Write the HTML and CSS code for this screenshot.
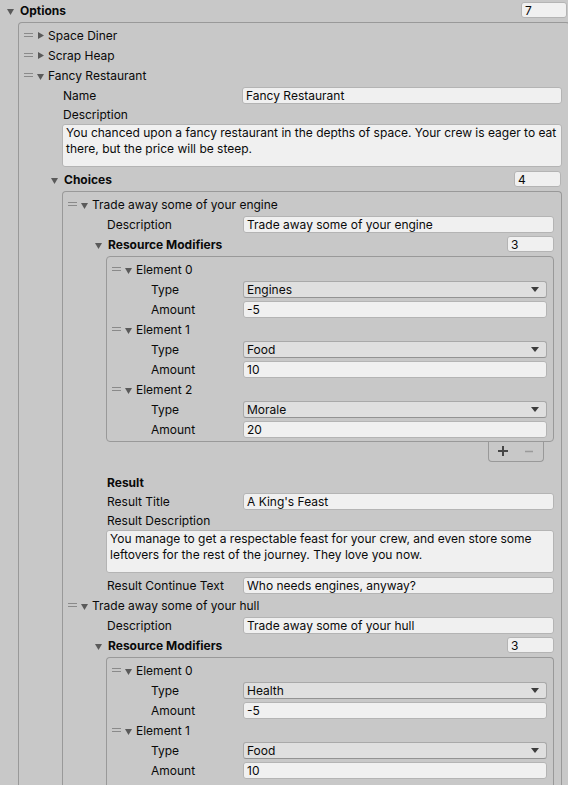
FILE: index.html
```html
<!DOCTYPE html>
<html>
<head>
<meta charset="utf-8">
<link rel="stylesheet" href="styles.css">
</head>
<body>
<div class="row header">
  <svg class="fold" viewBox="0 0 7 7"><polygon points="0,1 7,1 3.5,7"/></svg>
  <span class="bold">Options</span>
  <div class="count count-top">7</div>
</div>
<div class="box opts-box">
  <div class="row item"><span class="handle"></span><svg class="fold closed" viewBox="0 0 7 7"><polygon points="1,0 7,3.5 1,7"/></svg><span>Space Diner</span></div>
  <div class="row item"><span class="handle"></span><svg class="fold closed" viewBox="0 0 7 7"><polygon points="1,0 7,3.5 1,7"/></svg><span>Scrap Heap</span></div>
  <div class="row item"><span class="handle"></span><svg class="fold" viewBox="0 0 7 7"><polygon points="0,1 7,1 3.5,7"/></svg><span>Fancy Restaurant</span></div>
  <div class="row prop"><span class="lbl lbl-a">Name</span><div class="field">Fancy Restaurant</div></div>
  <div class="row prop ta-label">Description</div>
  <div class="textarea">You chanced upon a fancy restaurant in the depths of space. Your crew is eager to eat<br>there, but the price will be steep.</div>
  <div class="row sub">
    <svg class="fold" viewBox="0 0 7 7"><polygon points="0,1 7,1 3.5,7"/></svg>
    <span class="bold">Choices</span>
    <div class="count count-mid">4</div>
  </div>
  <div class="box choices-box">
    <div class="row item"><span class="handle"></span><svg class="fold" viewBox="0 0 7 7"><polygon points="0,1 7,1 3.5,7"/></svg><span>Trade away some of your engine</span></div>
    <div class="row prop"><span class="lbl lbl-b">Description</span><div class="field">Trade away some of your engine</div></div>
    <div class="row sub">
      <svg class="fold" viewBox="0 0 7 7"><polygon points="0,1 7,1 3.5,7"/></svg>
      <span class="bold">Resource Modifiers</span>
      <div class="count">3</div>
    </div>
    <div class="box rm-box">
      <div class="row item"><span class="handle"></span><svg class="fold" viewBox="0 0 7 7"><polygon points="0,1 7,1 3.5,7"/></svg><span>Element 0</span></div>
      <div class="row prop"><span class="lbl lbl-c">Type</span><div class="field dropdown"><span>Engines</span><svg class="arrow" viewBox="0 0 8 5"><polygon points="0,0 8,0 4,5"/></svg></div></div>
      <div class="row prop"><span class="lbl lbl-c">Amount</span><div class="field">-5</div></div>
      <div class="row item"><span class="handle"></span><svg class="fold" viewBox="0 0 7 7"><polygon points="0,1 7,1 3.5,7"/></svg><span>Element 1</span></div>
      <div class="row prop"><span class="lbl lbl-c">Type</span><div class="field dropdown"><span>Food</span><svg class="arrow" viewBox="0 0 8 5"><polygon points="0,0 8,0 4,5"/></svg></div></div>
      <div class="row prop"><span class="lbl lbl-c">Amount</span><div class="field">10</div></div>
      <div class="row item"><span class="handle"></span><svg class="fold" viewBox="0 0 7 7"><polygon points="0,1 7,1 3.5,7"/></svg><span>Element 2</span></div>
      <div class="row prop"><span class="lbl lbl-c">Type</span><div class="field dropdown"><span>Morale</span><svg class="arrow" viewBox="0 0 8 5"><polygon points="0,0 8,0 4,5"/></svg></div></div>
      <div class="row prop"><span class="lbl lbl-c">Amount</span><div class="field">20</div></div>
    </div>
    <div class="footer">
      <svg class="footer-icons" viewBox="0 0 54 19" width="54" height="19">
        <path d="M9 9h10M14 4v10" stroke="#464646" stroke-width="2" fill="none"/>
        <path d="M36 9.5h8" stroke="#9a9a9a" stroke-width="1.5" fill="none"/>
      </svg>
    </div>
    <div class="row prop result-head bold">Result</div>
    <div class="row prop"><span class="lbl lbl-b">Result Title</span><div class="field">A King's Feast</div></div>
    <div class="row prop ta-label">Result Description</div>
    <div class="textarea">You manage to get a respectable feast for your crew, and even store some<br>leftovers for the rest of the journey. They love you now.</div>
    <div class="row prop"><span class="lbl lbl-b">Result Continue Text</span><div class="field">Who needs engines, anyway?</div></div>
    <div class="row item"><span class="handle"></span><svg class="fold" viewBox="0 0 7 7"><polygon points="0,1 7,1 3.5,7"/></svg><span>Trade away some of your hull</span></div>
    <div class="row prop"><span class="lbl lbl-b">Description</span><div class="field">Trade away some of your hull</div></div>
    <div class="row sub">
      <svg class="fold" viewBox="0 0 7 7"><polygon points="0,1 7,1 3.5,7"/></svg>
      <span class="bold">Resource Modifiers</span>
      <div class="count">3</div>
    </div>
    <div class="box rm-box rm-last">
      <div class="row item"><span class="handle"></span><svg class="fold" viewBox="0 0 7 7"><polygon points="0,1 7,1 3.5,7"/></svg><span>Element 0</span></div>
      <div class="row prop"><span class="lbl lbl-c">Type</span><div class="field dropdown"><span>Health</span><svg class="arrow" viewBox="0 0 8 5"><polygon points="0,0 8,0 4,5"/></svg></div></div>
      <div class="row prop"><span class="lbl lbl-c">Amount</span><div class="field">-5</div></div>
      <div class="row item"><span class="handle"></span><svg class="fold" viewBox="0 0 7 7"><polygon points="0,1 7,1 3.5,7"/></svg><span>Element 1</span></div>
      <div class="row prop"><span class="lbl lbl-c">Type</span><div class="field dropdown"><span>Food</span><svg class="arrow" viewBox="0 0 8 5"><polygon points="0,0 8,0 4,5"/></svg></div></div>
      <div class="row prop"><span class="lbl lbl-c">Amount</span><div class="field">10</div></div>
    </div>
  </div>
</div>
</body>
</html>
```
FILE: styles.css
```css
* { box-sizing: border-box; }
html, body { margin: 0; padding: 0; }
body {
  width: 568px;
  height: 785px;
  overflow: hidden;
  background: #c8c8c8;
  font-family: Inter, "Noto Sans", sans-serif;
  font-size: 12px;
  color: #0a0a0a;
}
.row {
  display: flex;
  align-items: center;
  height: 20px;
  white-space: nowrap;
}
.bold { font-weight: 700; }
.fold {
  width: 7px;
  height: 7px;
  flex: none;
  margin-right: 6px;
  margin-top: 2px;
  fill: #5a5a5a;
}
.fold.closed { margin-top: 0; }
.header { padding-left: 7px; padding-right: 1px; }
.sub { padding-left: 32px; }
.item { padding-left: 5px; }
.item .fold { margin-right: 4px; }
.handle {
  width: 9px;
  height: 4px;
  flex: none;
  border-top: 1px solid #8a8a8a;
  border-bottom: 1px solid #8a8a8a;
  margin-right: 4px;
}
.prop { padding-left: 44px; }
.lbl { flex: none; }
.lbl-a { width: 179px; }
.lbl-b { width: 136px; }
.lbl-c { width: 92px; }
.field {
  flex: 1;
  min-width: 0;
  height: 17px;
  display: flex;
  align-items: center;
  padding: 0 3px;
  background: #f0f0f0;
  border: 1px solid #b4b4b4;
  border-radius: 3px;
  line-height: 15px;
}
.dropdown {
  background: #dfdfdf;
  border-color: #a9a9a9 #a9a9a9 #939393;
}
.arrow {
  width: 8px;
  height: 5px;
  margin-left: auto;
  margin-right: 4px;
  fill: #3c3c3c;
}
.count {
  margin-left: auto;
  width: 47px;
  height: 16px;
  display: flex;
  align-items: center;
  padding: 0 3px;
  background: #f0f0f0;
  border: 1px solid #b4b4b4;
  border-radius: 3px;
}
.count-top { width: 46px; }
.count-mid { margin-right: 1px; }
.box {
  border: 1px solid #999;
  border-radius: 4px;
}
.opts-box {
  margin: 2px -2px 0 18px;
  padding: 2px 7px 0 0;
  border-bottom: none;
  border-radius: 4px 4px 0 0;
}
.ta-label { height: 19px; }
.textarea {
  margin-left: 43px;
  height: 43px;
  margin-bottom: 2px;
  padding: 0 3px;
  background: #f0f0f0;
  border: 1px solid #b4b4b4;
  border-radius: 3px;
  line-height: 16px;
  white-space: nowrap;
  overflow: hidden;
}
.choices-box {
  margin: 2px 0 0 43px;
  padding: 2px 7px 0 0;
  border-bottom: none;
  border-radius: 4px 4px 0 0;
}
.rm-box {
  margin: 2px 0 0 43px;
  padding: 2px 6px 2px 0;
}
.rm-last {
  padding-bottom: 5px;
  border-bottom: none;
  border-radius: 4px 4px 0 0;
}
.footer {
  width: 56px;
  height: 20px;
  margin-left: auto;
  margin-right: 10px;
  border: 1px solid #999;
  border-top: none;
  border-radius: 0 0 4px 4px;
}
.footer-icons { display: block; }
.result-head { height: 17px; margin-top: 12px; }
```
